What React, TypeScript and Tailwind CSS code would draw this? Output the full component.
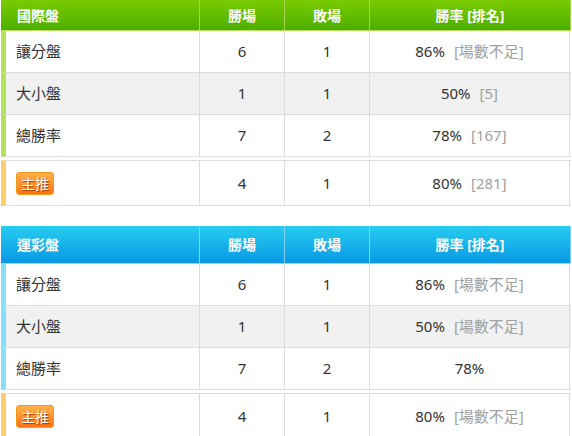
import React from 'react';

interface Row {
  label: string;
  win: number;
  lose: number;
  rate: string;
  rank?: string;
}

interface PanelProps {
  title: string;
  theme: 'green' | 'blue';
  rows: Row[];
  pick: Row;
  headH: string;
}

const font = { fontFamily: '"Noto Sans", "Noto Sans CJK TC", sans-serif' };

const RateCell: React.FC<{ row: Row }> = ({ row }) => (
  <div className="w-[200px] flex items-center justify-center border-r border-[#dcdcdc]">
    <span className="text-[#333]">{row.rate}</span>
    {row.rank && <span className="ml-[9px] text-[#a0a0a0]">{row.rank}</span>}
  </div>
);

const Panel: React.FC<PanelProps> = ({ title, theme, rows, pick, headH }) => {
  const green = theme === 'green';
  const head = green
    ? 'bg-gradient-to-b from-[#7acb00] to-[#4caf00] border-b-[#b6e35c]'
    : 'bg-gradient-to-b from-[#27cdf0] to-[#0a98e4] border-b-[#86dcf6]';
  const sep = green ? 'border-r-[#a3d84e]' : 'border-r-[#7fd3f4]';
  const bar = green ? 'border-l-[#b3e25a]' : 'border-l-[#86def8]';

  return (
    <div className="w-[570px] ml-px text-[15px]">
      <div className={`flex ${headH} border-b ${head} text-white font-bold text-[14px]`}>
        <div className={`w-[199px] flex items-center pl-[16px] border-r ${sep}`}>{title}</div>
        <div className={`w-[85px] flex items-center justify-center border-r ${sep}`}>勝場</div>
        <div className={`w-[85px] flex items-center justify-center border-r ${sep}`}>敗場</div>
        <div className={`w-[201px] flex items-center justify-center border-r ${sep}`}>勝率 [排名]</div>
      </div>
      {rows.map((r, i) => (
        <div
          key={r.label}
          className={`flex h-[42px] border-b border-b-[#dcdcdc] border-l-[5px] ${bar} ${i === 1 ? 'bg-[#f1f1f1]' : 'bg-white'}`}
        >
          <div className="w-[194px] flex items-center pl-[10px] border-r border-[#dcdcdc] text-[#333]">{r.label}</div>
          <div className="w-[85px] flex items-center justify-center border-r border-[#dcdcdc] text-[#333]">{r.win}</div>
          <div className="w-[85px] flex items-center justify-center border-r border-[#dcdcdc] text-[#333]">{r.lose}</div>
          <RateCell row={r} />
        </div>
      ))}
      <div className="flex h-[46px] mt-[3px] border-y border-y-[#dcdcdc] border-l-[5px] border-l-[#ffcd6b] bg-white">
        <div className="w-[194px] flex items-center pl-[10px] border-r border-[#dcdcdc]">
          <span className="inline-flex items-center justify-center w-[38px] h-[23px] rounded-[3px] border border-[#f39a1e] bg-gradient-to-b from-[#ffb048] to-[#ff7410] text-white text-[14px] [text-shadow:1px_1px_1px_#9a3a00]">
            主推
          </span>
        </div>
        <div className="w-[85px] flex items-center justify-center border-r border-[#dcdcdc] text-[#333]">{pick.win}</div>
        <div className="w-[85px] flex items-center justify-center border-r border-[#dcdcdc] text-[#333]">{pick.lose}</div>
        <RateCell row={pick} />
      </div>
    </div>
  );
};

const App: React.FC = () => {
  return (
    <div className="w-[572px] h-[436px] overflow-hidden bg-white" style={font}>
      <Panel
        title="國際盤"
        theme="green"
        headH="h-[31px]"
        rows={[
          { label: '讓分盤', win: 6, lose: 1, rate: '86%', rank: '[場數不足]' },
          { label: '大小盤', win: 1, lose: 1, rate: '50%', rank: '[5]' },
          { label: '總勝率', win: 7, lose: 2, rate: '78%', rank: '[167]' },
        ]}
        pick={{ label: '主推', win: 4, lose: 1, rate: '80%', rank: '[281]' }}
      />
      <div className="h-[20px]" />
      <Panel
        title="運彩盤"
        theme="blue"
        headH="h-[38px]"
        rows={[
          { label: '讓分盤', win: 6, lose: 1, rate: '86%', rank: '[場數不足]' },
          { label: '大小盤', win: 1, lose: 1, rate: '50%', rank: '[場數不足]' },
          { label: '總勝率', win: 7, lose: 2, rate: '78%' },
        ]}
        pick={{ label: '主推', win: 4, lose: 1, rate: '80%', rank: '[場數不足]' }}
      />
    </div>
  );
};

export default App;
